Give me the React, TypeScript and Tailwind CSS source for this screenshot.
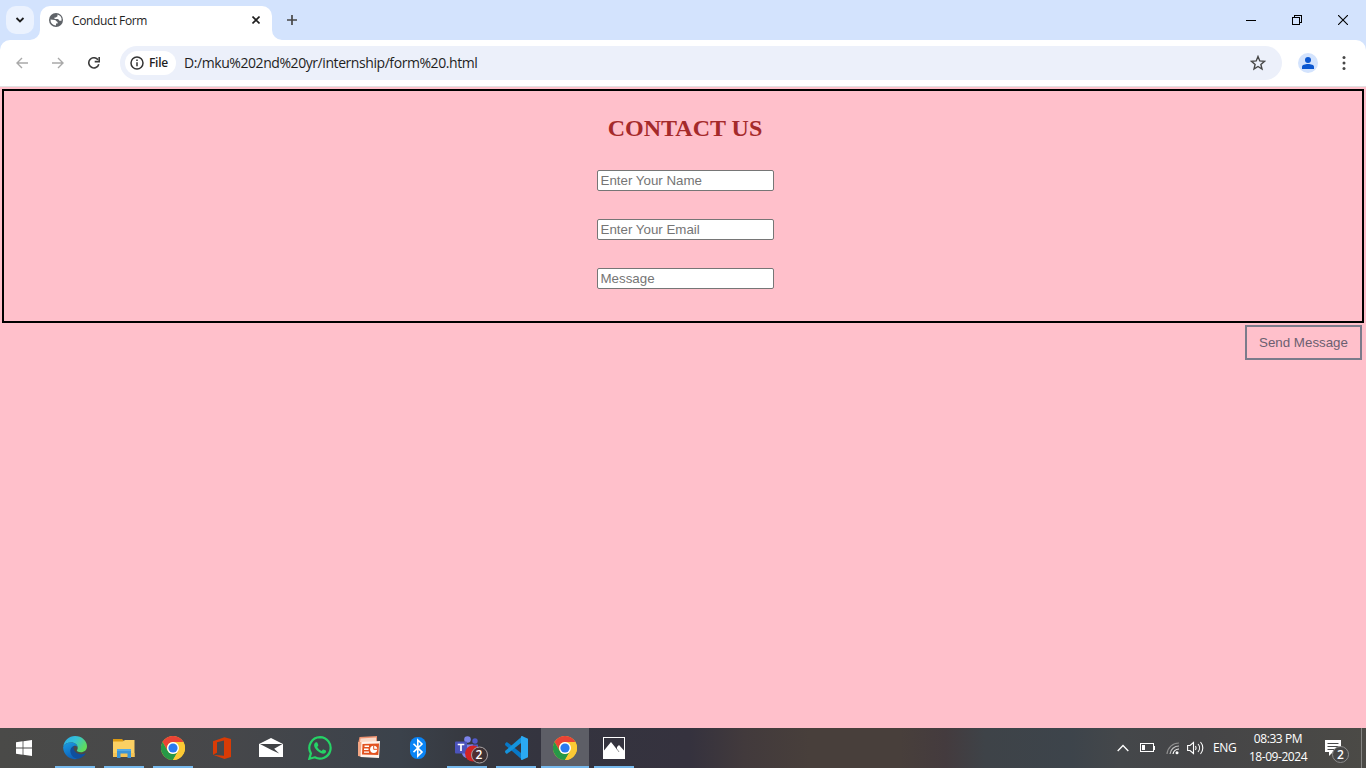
import React from "react";

const ui = "font-['Open_Sans','Noto_Sans',sans-serif]";

function ChromeLogo() {
  return (
    <svg width="24" height="24" viewBox="0 0 24 24">
      <circle cx="12" cy="12" r="12" fill="#fcc934" />
      <path d="M1.6 6A12 12 0 0 1 22.4 6H12a6 6 0 0 0-5.2 9z" fill="#ea4335" />
      <path d="M1.6 6A12 12 0 0 0 12 24l5.2-9A6 6 0 0 1 6.8 15z" fill="#279847" />
      <path d="M22.4 6A12 12 0 0 1 12 24l5.2-9A6 6 0 0 0 12 6z" fill="#fcc934" />
      <circle cx="12" cy="12" r="6" fill="#fff" />
      <circle cx="12" cy="12" r="4.6" fill="#2a7af0" />
    </svg>
  );
}

function EdgeLogo() {
  return (
    <svg width="24" height="24" viewBox="0 0 24 24">
      <defs>
        <linearGradient id="edgeTop" x1="0" y1="0" x2="1" y2="0.5">
          <stop offset="0" stopColor="#29a9e8" />
          <stop offset="0.5" stopColor="#35c1d8" />
          <stop offset="1" stopColor="#5fdc5c" />
        </linearGradient>
        <linearGradient id="edgeLow" x1="0" y1="0" x2="0.4" y2="1">
          <stop offset="0" stopColor="#1b9de2" />
          <stop offset="1" stopColor="#0d62bb" />
        </linearGradient>
      </defs>
      <path d="M.3 10.5C1.200 4.200 6 0 12 0c7 0 12 5 12 10.300 0 3.700-2.700 6-6.200 6-2.800 0-4-1-4-1.700 0-.6.9-1 .9-2.700 0-2.900-2.700-5.300-6.300-5.300C4.500 6.600 1.500 8 .3 10.500z" fill="url(#edgeTop)" />
      <path d="M.1 11.500C1 8.300 4 6.500 8.200 6.500c3.500 0 6 2 6.400 4.500-1-1-2-1.300-3-1.300-3 1-4.200 3.500-3.700 6.300.7 3.500 4 6.300 7.600 6.700A12 12 0 0 1 .1 11.500z" fill="url(#edgeLow)" />
      <path d="M11.400 9.800c-3.400 1.300-4.600 4-3.800 7 1 3.800 4.400 6 7.800 6 3.200-.9 5.700-2.700 7-5 .2-.5-.1-.6-.5-.4-2.700 1.300-6.500 1-9-1-2.400-1.900-3-4.600-1.500-6.600z" fill="#104f9d" />
    </svg>
  );
}

function FolderIcon() {
  return (
    <svg width="24" height="24" viewBox="0 0 24 24">
      <path d="M1 3h9l2 2h-1v5H1z" fill="#dc9a12" />
      <path d="M1 5.500h9.500L13 4h9.500v17H1z" fill="#fbd063" />
      <path d="M1 17h21.500v4H1z" fill="#f6c455" />
      <path d="M5 13h14v9h-3.500v-4.500h-7V22H5z" fill="#3a94d8" />
      <path d="M5 13h14v2H5z" fill="#55aae4" />
    </svg>
  );
}

function OfficeIcon() {
  return (
    <svg width="24" height="24" viewBox="0 0 24 24">
      <path d="M3 5.300 14.500 1.200 21 3v18l-6.500 2L3 18.800l11 .9V4.500L7 6.200v10.600l-4 2z" fill="#d93b05" />
    </svg>
  );
}

function MailIcon() {
  return (
    <svg width="24" height="24" viewBox="0 0 24 24">
      <path d="M0 8 12 2l12 6v13H0z" fill="#fff" />
      <path d="M1 8h22.500l-8.300 4.700 5 4.800L12.500 14z" fill="#404245" />
    </svg>
  );
}

function WhatsAppIcon() {
  return (
    <svg width="24" height="24" viewBox="0 0 24 24">
      <path d="M12.050 1.200a10.700 10.700 0 0 0-9.150 16.200L1.400 22.700l5.400-1.400A10.700 10.700 0 1 0 12.050 1.200z" fill="none" stroke="#25d366" strokeWidth="2.200" />
      <path d="M8.700 6.300c.4 0 .6.200.8.700l.8 2c.1.400 0 .8-1.100 1.900 1.100 2 2.500 3.200 4.500 4 1.200-1.400 1.300-1.700 1.900-1.400l2.200 1.100c.5.300.4 1-.1 1.900-.5.800-1.700 1.300-2.700 1.200-4.400-.8-8.600-5-8.900-8.200 0-1.300.5-2.400 1.400-3 .3-.2.800-.2 1.200-.2z" fill="#25d366" />
    </svg>
  );
}

function PowerPointIcon() {
  return (
    <svg width="24" height="24" viewBox="0 0 24 24">
      <path d="M2.500 1 20 0v8H1z" fill="#ee9270" />
      <path d="M3.500 2.500 19 1.500V6H3z" fill="#fbd9c8" />
      <path d="M1 6h5v15l-5-1z" fill="#f3a684" />
      <path d="m4.500 6 18.500-1-1 17-18.500-1z" fill="#fff3ec" />
      <path d="m5.500 8 16.500-.5-.7 11.500-16.300-.5z" fill="#e2521f" />
      <path d="M7.500 10.300h4.500M7 13.200h4.500M7 16.100h5" stroke="#fff" strokeWidth="1.400" />
      <circle cx="16.700" cy="13.300" r="3.600" fill="#fff" />
      <path d="M16.700 13.300V9.500M16.700 13.300h3.800" stroke="#e2521f" strokeWidth="1" />
    </svg>
  );
}

function BluetoothIcon() {
  return (
    <svg width="24" height="24" viewBox="0 0 24 24">
      <rect x="4" y="1" width="16" height="22" rx="7.500" fill="#0a84f5" />
      <path d="m7.500 7.800 8.500 8.300-4.200 4V4l4.200 4-8.500 8.200" fill="none" stroke="#fff" strokeWidth="1.600" />
    </svg>
  );
}

function TeamsIcon() {
  return (
    <svg width="36" height="30" viewBox="0 0 36 30">
      <circle cx="23" cy="6" r="2.700" fill="#5059c9" />
      <circle cx="15.500" cy="4.500" r="3.300" fill="#7b83eb" />
      <path d="M19 9.500h7v7a4 4 0 0 1-7 1z" fill="#5059c9" />
      <path d="M10 9.500h11v8a5.500 5.500 0 0 1-11 0z" fill="#7b83eb" />
      <rect x="3" y="6.500" width="12" height="12" rx="1" fill="#4b53bc" />
      <path d="M5.700 9.500h6.600M9 9.500V16" stroke="#fff" strokeWidth="1.700" />
      <circle cx="21" cy="18.500" r="8" fill="#d22424" />
      <circle cx="27.500" cy="20" r="8" fill="#3c3032" fillOpacity=".85" stroke="#a9a3a4" strokeWidth="1" />
    </svg>
  );
}

function VSCodeIcon() {
  return (
    <svg width="24" height="24" viewBox="0 0 24 24">
      <path d="m1.300 7.200 1.500-1.300 15.600 12V24L1 9z" fill="#0879c8" />
      <path d="m1.300 16.800 1.500 1.300L18.400 6V0L1 15z" fill="#1593dc" />
      <path d="M18 0l6 2.700v18.600L18 24c-.8 0-1-.5-1-1V1c0-.5.300-1 1-1z" fill="#2ba9f3" />
    </svg>
  );
}

function PhotosIcon() {
  return (
    <svg width="22" height="22" viewBox="0 0 22 22">
      <rect x=".5" y=".5" width="21" height="21" fill="none" stroke="#fff" />
      <path d="M1 13.500 8 5l6 7.500v-2.500l2-2 5 5.500V21H1z" fill="#fff" />
      <path d="m14 12 2 3" stroke="#999" />
    </svg>
  );
}

const apps = [
  { name: "edge", icon: <EdgeLogo />, open: true },
  { name: "files", icon: <FolderIcon />, open: true },
  { name: "chrome", icon: <ChromeLogo />, open: true },
  { name: "office", icon: <OfficeIcon />, open: false },
  { name: "mail", icon: <MailIcon />, open: false },
  { name: "whatsapp", icon: <WhatsAppIcon />, open: false },
  { name: "powerpoint", icon: <PowerPointIcon />, open: false },
  { name: "bluetooth", icon: <BluetoothIcon />, open: false },
  { name: "teams", icon: <TeamsIcon />, open: true },
  { name: "vscode", icon: <VSCodeIcon />, open: true },
  { name: "browser", icon: <ChromeLogo />, open: true, active: true },
  { name: "photos", icon: <PhotosIcon />, open: true },
];

function TabStrip() {
  return (
    <div className="flex h-10 shrink-0 bg-[#d3e3fd]">
      <div className="mt-[6px] ml-[6px] flex h-7 w-7 items-center justify-center rounded-[10px] bg-[#ebf2fe]">
        <svg width="10" height="8" viewBox="0 0 10 8">
          <path d="m1.500 2 3.500 3.500L8.500 2" fill="none" stroke="#1f1f1f" strokeWidth="1.800" />
        </svg>
      </div>
      <div className="relative mt-[6px] ml-[6px] flex h-[34px] w-[232px] items-center rounded-t-[10px] bg-white pb-[6px]">
        <svg className="absolute bottom-0 -left-[10px]" width="10" height="10" viewBox="0 0 10 10">
          <path d="M0 10A10 10 0 0 0 10 0v10z" fill="#fff" />
        </svg>
        <svg className="absolute -right-[10px] bottom-0" width="10" height="10" viewBox="0 0 10 10">
          <path d="M10 10A10 10 0 0 1 0 0v10z" fill="#fff" />
        </svg>
        <svg className="ml-[9px]" width="14" height="14" viewBox="0 0 14 14">
          <circle cx="7" cy="7" r="7" fill="#5f6368" />
          <path d="M8.500 1.500v1.800L6.800 4.500H5.500v1.600h3.200c1 0 1 1.700 2 1.700h1.800A5.600 5.600 0 0 0 8.500 1.500zM1.500 6.600l4.200.5c1.500 0 1.700 1.900 2.900 1.900v1.600H7v2a5.600 5.600 0 0 1-5.500-6z" fill="#fff" />
        </svg>
        <span className="ml-[9px] pt-[2px] text-[12px] leading-4 tracking-[-0.36px] whitespace-nowrap text-[#1f1f1f]">Conduct Form</span>
        <svg className="mr-[12px] ml-auto" width="8" height="8" viewBox="0 0 8 8">
          <path d="m.5.5 7 7m0-7-7 7" stroke="#1f1f1f" strokeWidth="1.600" />
        </svg>
      </div>
      <svg className="mt-[15px] ml-[15px]" width="10" height="10" viewBox="0 0 10 10">
        <path d="M5 0v10M0 5h10" stroke="#474747" strokeWidth="1.700" />
      </svg>
      <div className="mt-[15px] mr-[18px] ml-auto flex gap-[36px]">
        <svg width="10" height="10" viewBox="0 0 10 10" shapeRendering="crispEdges">
          <path d="M0 5.500h10" stroke="#000" />
        </svg>
        <svg width="10" height="10" viewBox="0 0 10 10" shapeRendering="crispEdges">
          <path d="M.5 2.500h7v7h-7zM2.500 2.500v-2h7v7h-2" fill="none" stroke="#000" />
        </svg>
        <svg width="10" height="10" viewBox="0 0 10 10">
          <path d="m0 0 10 10M10 0 0 10" stroke="#000" strokeWidth="1.100" />
        </svg>
      </div>
    </div>
  );
}

function Toolbar() {
  return (
    <div className="bg-[#d3e3fd]">
      <div className="flex h-[47px] items-center rounded-t-[10px] border-b border-[#dfe3e3] bg-white">
        <svg className="ml-[16px]" width="12" height="12" viewBox="0 0 12 12">
          <path d="M12 6H1m5-5L1 6l5 5" fill="none" stroke="#a9a9a9" strokeWidth="1.400" />
        </svg>
        <svg className="ml-[24px]" width="12" height="12" viewBox="0 0 12 12">
          <path d="M0 6h11M6 1l5 5-5 5" fill="none" stroke="#a9a9a9" strokeWidth="1.400" />
        </svg>
        <svg className="ml-[24px]" width="12" height="12" viewBox="0 0 12 12">
          <path d="M10.800 7.200A5.100 5.100 0 1 1 10 2.800" fill="none" stroke="#3c3c3c" strokeWidth="1.600" />
          <path d="M11.200 0v4.600H6.700" fill="none" stroke="#3c3c3c" strokeWidth="1.600" />
        </svg>
        <div className="ml-[20px] flex h-[34px] w-[1162px] items-center rounded-full bg-[#ecf0fa] pr-[16px] pl-[5px]">
          <div className="flex h-6 w-[51px] items-center rounded-full bg-white pl-[5px]">
            <svg width="14" height="14" viewBox="0 0 14 14">
              <circle cx="7" cy="7" r="6" fill="none" stroke="#333" strokeWidth="1.500" />
              <path d="M7 6.200v4M7 3.600v1.500" stroke="#333" strokeWidth="1.500" />
            </svg>
            <span className="ml-[5px] text-[12px] leading-4 font-semibold tracking-[-0.3px] whitespace-nowrap text-[#1f1f1f]">File</span>
          </div>
          <span className="ml-[8px] text-[14px] leading-5 tracking-[-0.43px] whitespace-nowrap text-[#1f1f1f]">D:/mku%202nd%20yr/internship/form%20.html</span>
          <svg className="ml-auto" width="16" height="16" viewBox="0 0 16 16">
            <path d="m8 1.500 1.800 4.400 4.700.4-3.600 3.100 1.100 4.600L8 11.500 4 14l1.100-4.600-3.600-3.100 4.700-.4z" fill="none" stroke="#474747" strokeWidth="1.400" />
          </svg>
        </div>
        <div className="ml-[16px] flex h-5 w-5 items-center justify-center rounded-full bg-[#d3e3fd]">
          <svg width="12" height="12" viewBox="0 0 12 12" fill="#0b57d0">
            <circle cx="6" cy="3" r="3" />
            <path d="M0 12V9.800C0 8 3 7 6 7s6 1 6 2.800V12z" />
          </svg>
        </div>
        <svg className="ml-[24px]" width="4" height="14" viewBox="0 0 4 14" fill="#474747">
          <circle cx="2" cy="1.600" r="1.500" />
          <circle cx="2" cy="7" r="1.500" />
          <circle cx="2" cy="12.400" r="1.500" />
        </svg>
      </div>
    </div>
  );
}

const inputClass =
  "block h-[21px] w-[177px] rounded-[2px] border border-[#767676] bg-white px-[2.5px] text-[13.333px] leading-[15px] placeholder:text-[#757575] placeholder:opacity-100 outline-none";

function ContactPage() {
  return (
    <main className="flex-1 bg-[#ffc0cb] px-[2px] pt-[2px] font-['Liberation_Sans',sans-serif]">
      <form className="flex h-[234px] flex-col items-center border-2 border-black pt-[23px] pl-[5px]">
        <h2 className="-ml-px font-['Liberation_Serif',serif] text-[24px] leading-[28px] font-bold text-[#a52a2a]">CONTACT US</h2>
        <div className="mt-[28px] flex flex-col gap-[28px]">
          <input className={inputClass} placeholder="Enter Your Name" />
          <input className={inputClass} placeholder="Enter Your Email" />
          <input className={inputClass} placeholder="Message" />
        </div>
      </form>
      <div className="flex justify-end pt-[2px] pr-[2px]">
        <button className="h-[35px] w-[117px] border-2 border-[#7b7b8b] text-[13.333px] leading-[15px] whitespace-nowrap text-[#6b5f70]">Send Message</button>
      </div>
    </main>
  );
}

function Taskbar() {
  return (
    <footer className="flex h-10 shrink-0 bg-[linear-gradient(90deg,#4a4a48_0px,#46474a_230px,#3b424b_400px,#36383f_470px,#34343f_540px,#35323e_690px,#423a3c_745px,#483f3b_810px,#483f3b_900px,#443b3e_945px,#3e4348_985px,#3d444b_1070px,#44474a_1120px,#454547_1200px,#4b4a46_1366px)] text-white">
      <div className="flex w-12 items-center justify-center">
        <svg width="16" height="16" viewBox="0 0 16 16" fill="#fff">
          <path d="M0 2.200 6.600 1.300v6.300H0zM7.400 1.200 16 0v7.600H7.400zM0 8.400h6.600v6.300L0 13.800zM7.400 8.400H16V16l-8.600-1.200z" />
        </svg>
      </div>
      <div className="ml-[3px] flex gap-px">
        {apps.map((app) => (
          <div key={app.name} className={`flex w-12 flex-col items-center ${app.active ? "bg-[#5d5e66]" : ""}`}>
            <div className="flex h-[38px] items-center justify-center pt-[2px]">
              {app.name === "teams" ? (
                <div className="relative mt-[4px] ml-[5px] flex">
                  {app.icon}
                  <span className="absolute top-[12px] left-[24px] text-[12px] leading-4 font-semibold">2</span>
                </div>
              ) : (
                app.icon
              )}
            </div>
            {app.open && <div className={`h-[2px] bg-[#76b9ed] ${app.active ? "w-12" : "w-10"}`} />}
          </div>
        ))}
      </div>
      <div className="ml-auto flex items-center">
        <svg width="12" height="8" viewBox="0 0 12 8">
          <path d="m.7 7 5.300-5.500L11.300 7" fill="none" stroke="#fff" strokeWidth="1.300" />
        </svg>
        <svg className="ml-[11px]" width="15" height="10" viewBox="0 0 15 10" shapeRendering="crispEdges">
          <path d="M.5.500h13v8H.5zM14.500 3v4" fill="none" stroke="#fff" />
          <path d="M2 2h3v5H2z" fill="#fff" />
        </svg>
        <svg className="ml-[11px]" width="14" height="14" viewBox="0 0 14 14" fill="none" strokeWidth="1.200">
          <path d="M1 13A12 12 0 0 1 13 2" stroke="#8e8e8e" />
          <path d="M4 13a9 9 0 0 1 9-8" stroke="#c0c0c0" />
          <path d="M7 13a6 6 0 0 1 6-5" stroke="#fff" />
          <circle cx="11" cy="11.800" r="1.500" fill="#fff" />
        </svg>
        <svg className="ml-[7px]" width="17" height="14" viewBox="0 0 17 14" fill="none" stroke="#fff" strokeWidth="1.100">
          <path d="M.6 4.500H3L6.500 1.500v11L3 9.500H.6zM8.500 5a4 4 0 0 1 0 4M11 3a6 6 0 0 1 0 8M13.500 1a9 9 0 0 1 0 12" />
        </svg>
        <span className="ml-[9px] w-[24px] text-[12px] leading-4 tracking-[-0.3px] whitespace-nowrap">ENG</span>
        <div className="ml-[12px] flex w-[58px] flex-col items-center text-[12px] leading-[18px] whitespace-nowrap">
          <span className="tracking-[-0.400px]">08:33 PM</span>
          <span className="tracking-[-0.450px]">18-09-2024</span>
        </div>
        <div className="relative ml-[18px] mt-[7px] h-[25px] w-[25px]">
          <svg width="25" height="25" viewBox="0 0 25 25">
            <path d="M0 1h16v12H8l-4 4v-4H0z" fill="#fff" />
            <path d="M2.500 4.500h11M2.500 7.500h11M2.500 10.500h8" stroke="#48494a" />
            <circle cx="15.500" cy="15.500" r="8" fill="#464646" stroke="#8d8d8d" />
          </svg>
          <span className="absolute top-[7.500px] left-[12px] text-[12px] leading-4 font-semibold">2</span>
        </div>
        <div className="ml-[11px] h-10 w-[5px] border-l border-[#858583]" />
      </div>
    </footer>
  );
}

export default function App() {
  return (
    <div className={`flex h-screen w-full flex-col overflow-hidden ${ui}`}>
      <TabStrip />
      <Toolbar />
      <ContactPage />
      <Taskbar />
    </div>
  );
}
